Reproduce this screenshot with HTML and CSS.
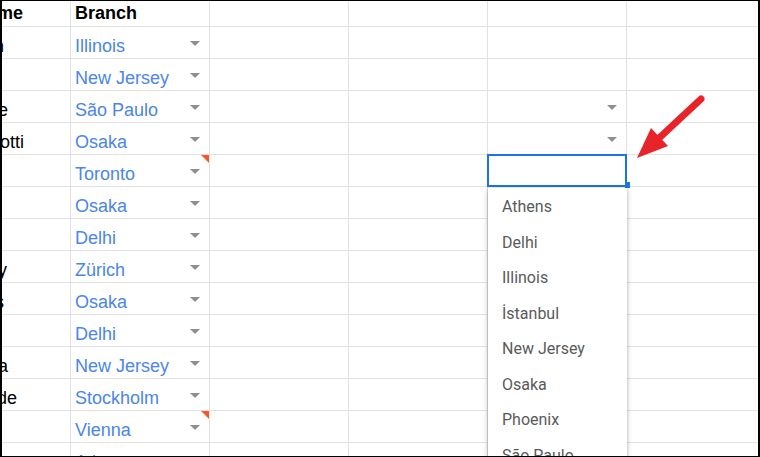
FILE: index.html
```html
<!DOCTYPE html>
<html lang="en">
<head>
<meta charset="utf-8">
<title>Sheet dropdown</title>
<link rel="stylesheet" href="styles.css">
</head>
<body>
<div class="frame">
  <div class="sheet">
    <div class="row head">
      <div class="cell"><span class="txt">Full Name</span></div>
      <div class="cell"><span class="txt">Branch</span></div>
      <div class="cell"></div><div class="cell"></div><div class="cell"></div><div class="cell"></div>
    </div>
    <div class="row">
      <div class="cell"><span class="txt">Jo Chen</span></div>
      <div class="cell"><span class="val">Illinois</span><i class="caret"></i></div>
      <div class="cell"></div><div class="cell"></div><div class="cell"></div><div class="cell"></div>
    </div>
    <div class="row">
      <div class="cell"><span class="txt">Amy Li</span></div>
      <div class="cell"><span class="val">New Jersey</span><i class="caret"></i></div>
      <div class="cell"></div><div class="cell"></div><div class="cell"></div><div class="cell"></div>
    </div>
    <div class="row">
      <div class="cell"><span class="txt">Ivy Lowe</span></div>
      <div class="cell"><span class="val">São Paulo</span><i class="caret"></i></div>
      <div class="cell"></div><div class="cell"></div>
      <div class="cell"><i class="caret"></i></div>
      <div class="cell"></div>
    </div>
    <div class="row">
      <div class="cell"><span class="txt">Alba Spotti</span></div>
      <div class="cell"><span class="val">Osaka</span><i class="caret"></i></div>
      <div class="cell"></div><div class="cell"></div>
      <div class="cell"><i class="caret"></i></div>
      <div class="cell"></div>
    </div>
    <div class="row">
      <div class="cell"><span class="txt">Bo Kim</span></div>
      <div class="cell noted"><span class="val">Toronto</span><i class="caret"></i><b class="note"></b></div>
      <div class="cell"></div><div class="cell"></div>
      <div class="cell selected">
        <b class="sel-box"></b><b class="handle"></b>
        <ul class="menu">
          <li>Athens</li>
          <li>Delhi</li>
          <li>Illinois</li>
          <li>İstanbul</li>
          <li>New Jersey</li>
          <li>Osaka</li>
          <li>Phoenix</li>
          <li>São Paulo</li>
          <li>Stockholm</li>
        </ul>
      </div>
      <div class="cell"></div>
    </div>
    <div class="row">
      <div class="cell"><span class="txt">Li Wei</span></div>
      <div class="cell"><span class="val">Osaka</span><i class="caret"></i></div>
      <div class="cell"></div><div class="cell"></div><div class="cell"></div><div class="cell"></div>
    </div>
    <div class="row">
      <div class="cell"><span class="txt">Raj Ali</span></div>
      <div class="cell"><span class="val">Delhi</span><i class="caret"></i></div>
      <div class="cell"></div><div class="cell"></div><div class="cell"></div><div class="cell"></div>
    </div>
    <div class="row">
      <div class="cell"><span class="txt">Jan Frey</span></div>
      <div class="cell"><span class="val">Zürich</span><i class="caret"></i></div>
      <div class="cell"></div><div class="cell"></div><div class="cell"></div><div class="cell"></div>
    </div>
    <div class="row">
      <div class="cell"><span class="txt">Kai Dias</span></div>
      <div class="cell"><span class="val">Osaka</span><i class="caret"></i></div>
      <div class="cell"></div><div class="cell"></div><div class="cell"></div><div class="cell"></div>
    </div>
    <div class="row">
      <div class="cell"><span class="txt">Om Rai</span></div>
      <div class="cell"><span class="val">Delhi</span><i class="caret"></i></div>
      <div class="cell"></div><div class="cell"></div><div class="cell"></div><div class="cell"></div>
    </div>
    <div class="row">
      <div class="cell"><span class="txt">Jo Costa</span></div>
      <div class="cell"><span class="val">New Jersey</span><i class="caret"></i></div>
      <div class="cell"></div><div class="cell"></div><div class="cell"></div><div class="cell"></div>
    </div>
    <div class="row">
      <div class="cell"><span class="txt">Ida Lunde</span></div>
      <div class="cell"><span class="val">Stockholm</span><i class="caret"></i></div>
      <div class="cell"></div><div class="cell"></div><div class="cell"></div><div class="cell"></div>
    </div>
    <div class="row">
      <div class="cell"><span class="txt">Max Ott</span></div>
      <div class="cell noted"><span class="val">Vienna</span><i class="caret"></i><b class="note"></b></div>
      <div class="cell"></div><div class="cell"></div><div class="cell"></div><div class="cell"></div>
    </div>
    <div class="row">
      <div class="cell"><span class="txt">Al Ng</span></div>
      <div class="cell"><span class="val">Athens</span><i class="caret"></i></div>
      <div class="cell"></div><div class="cell"></div><div class="cell"></div><div class="cell"></div>
    </div>
  </div>
</div>
<svg class="pointer" width="760" height="457" viewBox="0 0 760 457" aria-hidden="true">
  <line x1="701" y1="99" x2="657" y2="140" stroke="#e8232a" stroke-width="7" stroke-linecap="round"/>
  <polygon points="637,158 651,128 668,146" fill="#e8232a"/>
</svg>
</body>
</html>
```

FILE: styles.css
```css
html, body {
  margin: 0;
  padding: 0;
  background: #fff;
}

body {
  width: 760px;
  height: 457px;
  overflow: hidden;
  position: relative;
  font-family: "Liberation Sans", Arial, sans-serif;
}

.frame {
  box-sizing: border-box;
  width: 760px;
  height: 457px;
  border-style: solid;
  border-color: #000;
  border-width: 1px 2px 1px 2px;
  overflow: hidden;
  background: #fff;
}

.sheet {
  margin-left: -69px;
  width: 834px;
}

.row {
  display: flex;
  height: 32px;
}

.row.head {
  height: 26px;
}

.cell {
  box-sizing: border-box;
  flex: 0 0 139px;
  height: 100%;
  border-right: 1px solid #e2e2e2;
  border-bottom: 1px solid #e2e2e2;
  display: flex;
  align-items: flex-end;
  padding: 0 4px 2px 4px;
  font-size: 18px;
  line-height: 20px;
  white-space: nowrap;
  color: #000;
}

.cell:first-child {
  flex-basis: 138px;
}

.head .cell {
  font-weight: bold;
  padding-bottom: 3px;
}

.val {
  color: #4a86e8;
}

.caret {
  display: block;
  width: 0;
  height: 0;
  border-left: 5px solid transparent;
  border-right: 5px solid transparent;
  border-top: 5px solid #8f8f8f;
  margin-left: auto;
  margin-right: 5px;
  margin-bottom: 10px;
}

.noted {
  position: relative;
}

.note {
  position: absolute;
  top: 0;
  right: 0;
  width: 8px;
  height: 8px;
  background: #f65a2b;
  clip-path: polygon(0 0, 100% 0, 100% 100%);
}

.selected {
  position: relative;
  z-index: 5;
}

.sel-box {
  position: absolute;
  left: -1px;
  top: -1px;
  width: 140px;
  height: 33px;
  box-sizing: border-box;
  border: 2px solid #1a73e8;
}

.handle {
  position: absolute;
  left: 137px;
  top: 27px;
  width: 5px;
  height: 6px;
  background: #1a73e8;
}

.menu {
  position: absolute;
  left: 0;
  top: 33px;
  width: 139px;
  margin: 0;
  padding: 1px 0 0 0;
  list-style: none;
  background: #fff;
  box-shadow: 0 2px 5px rgba(0, 0, 0, 0.28), 0 0 2px rgba(0, 0, 0, 0.12);
  font-family: Roboto, "Noto Sans", sans-serif;
  font-size: 16px;
  color: #5a5a5a;
}

.menu li {
  height: 35.5px;
  line-height: 35.5px;
  padding-left: 14px;
}

.pointer {
  position: absolute;
  left: 0;
  top: 0;
  pointer-events: none;
}
```
